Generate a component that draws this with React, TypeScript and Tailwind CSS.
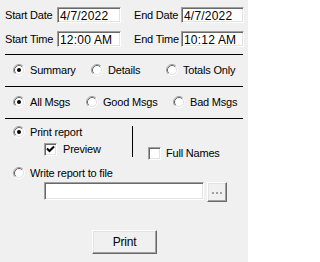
import React from 'react';

function Field({ value, w, h = 'h-[16px]' }: { value?: string; w: string; h?: string }) {
  return (
    <div
      className={`${w} ${h} shrink-0 flex items-center bg-white border border-t-[#a0a0a0] border-l-[#a0a0a0] border-b-white border-r-white shadow-[inset_1px_1px_0_#696969,inset_-1px_-1px_0_#e3e3e3] pl-[2px] pt-px text-[12px] tracking-[0.2px]`}
    >
      {value}
    </div>
  );
}

function Radio({ checked }: { checked?: boolean }) {
  return (
    <svg width="12" height="12" viewBox="0 0 12 12" className="shrink-0">
      <circle cx="6" cy="6" r="4.2" fill="#fff" />
      <path d="M2.11 9.89 A5.5 5.5 0 0 1 9.89 2.11" stroke="#a0a0a0" fill="none" />
      <path d="M9.89 2.11 A5.5 5.5 0 0 1 2.11 9.89" stroke="#fff" fill="none" />
      <path d="M2.82 9.18 A4.5 4.5 0 0 1 9.18 2.82" stroke="#696969" fill="none" />
      <path d="M9.18 2.82 A4.5 4.5 0 0 1 2.82 9.18" stroke="#e3e3e3" fill="none" />
      {checked && <circle cx="6" cy="6" r="2" fill="#000" />}
    </svg>
  );
}

function Check({ checked }: { checked?: boolean }) {
  return (
    <div className="w-[13px] h-[13px] shrink-0 bg-white border border-t-[#a0a0a0] border-l-[#a0a0a0] border-b-white border-r-white shadow-[inset_1px_1px_0_#696969,inset_-1px_-1px_0_#e3e3e3] flex items-center justify-center">
      {checked && (
        <svg width="9" height="9" viewBox="0 0 9 9">
          <path d="M1 3.5 L3.5 6 L8 1.5" stroke="#000" strokeWidth="2" fill="none" />
        </svg>
      )}
    </div>
  );
}

function Opt({ label, checked, w }: { label: string; checked?: boolean; w?: string }) {
  return (
    <div className={`${w ?? ''} shrink-0 flex items-center gap-[5px]`}>
      <Radio checked={checked} />
      <span>{label}</span>
    </div>
  );
}

export default function App() {
  return (
    <div className="w-[248px] h-[262px] bg-[#f0f0f0] text-[11px] leading-none tracking-[-0.2px] text-black font-['Liberation_Sans',Arial,sans-serif] px-[5px] pt-[7px]">
      {/* Date / time */}
      <div className="flex items-center h-[16px]">
        <span className="w-[52px] shrink-0">Start Date</span>
        <Field w="w-[64px]" value="4/7/2022" />
        <span className="ml-[13px] w-[47px] shrink-0">End Date</span>
        <Field w="w-[63px]" value="4/7/2022" />
      </div>
      <div className="flex items-center h-[16px] mt-[8px]">
        <span className="w-[52px] shrink-0">Start Time</span>
        <Field w="w-[64px]" value="12:00 AM" />
        <span className="ml-[13px] w-[47px] shrink-0">End Time</span>
        <Field w="w-[63px]" value="10:12 AM" />
      </div>

      <div className="mt-[7px] h-px w-[238px] bg-black" />

      <div className="mt-[9px] h-[12px] flex items-center pl-[8px]">
        <Opt label="Summary" checked w="w-[78px]" />
        <Opt label="Details" w="w-[75px]" />
        <Opt label="Totals Only" />
      </div>

      <div className="mt-[10px] h-px w-[238px] bg-black" />

      <div className="mt-[9px] h-[12px] flex items-center pl-[8px]">
        <Opt label="All Msgs" checked w="w-[73px]" />
        <Opt label="Good Msgs" w="w-[87px]" />
        <Opt label="Bad Msgs" />
      </div>

      <div className="mt-[10px] h-px w-[238px] bg-black" />

      {/* Output */}
      <div className="mt-[7px] h-[34px] grid grid-cols-[127px_1px_110px] items-start">
        <div className="pl-[8px]">
          <Opt label="Print report" checked />
          <div className="mt-[5px] ml-[31px] flex items-center gap-[6px]">
            <Check checked />
            <span>Preview</span>
          </div>
        </div>
        <div className="h-[31px] bg-black" />
        <div className="pl-[15px] pt-[21px] flex items-center gap-[5px]">
          <Check />
          <span>Full Names</span>
        </div>
      </div>

      <div className="mt-[7px] pl-[8px]">
        <Opt label="Write report to file" />
      </div>
      <div className="mt-[3px] ml-[39px] flex items-start">
        <Field w="w-[160px]" h="h-[18px]" />
        <button className="ml-[3px] w-[20px] h-[20px] shrink-0 bg-[#f0f0f0] border border-t-white border-l-white border-b-[#696969] border-r-[#696969] shadow-[inset_-1px_-1px_0_#a0a0a0,inset_1px_1px_0_#e3e3e3] flex items-center justify-center gap-[2px] pt-[2px]">
          <span className="w-[2px] h-[2px] bg-[#a0a0a0]" />
          <span className="w-[2px] h-[2px] bg-[#a0a0a0]" />
          <span className="w-[2px] h-[2px] bg-[#a0a0a0]" />
        </button>
      </div>

      <button className="mt-[28px] ml-[87px] w-[65px] h-[24px] bg-[#f0f0f0] border border-t-white border-l-white border-b-[#696969] border-r-[#696969] shadow-[inset_-1px_-1px_0_#a0a0a0,inset_1px_1px_0_#e3e3e3] flex items-center justify-center text-[12px]">
        Print
      </button>
    </div>
  );
}
